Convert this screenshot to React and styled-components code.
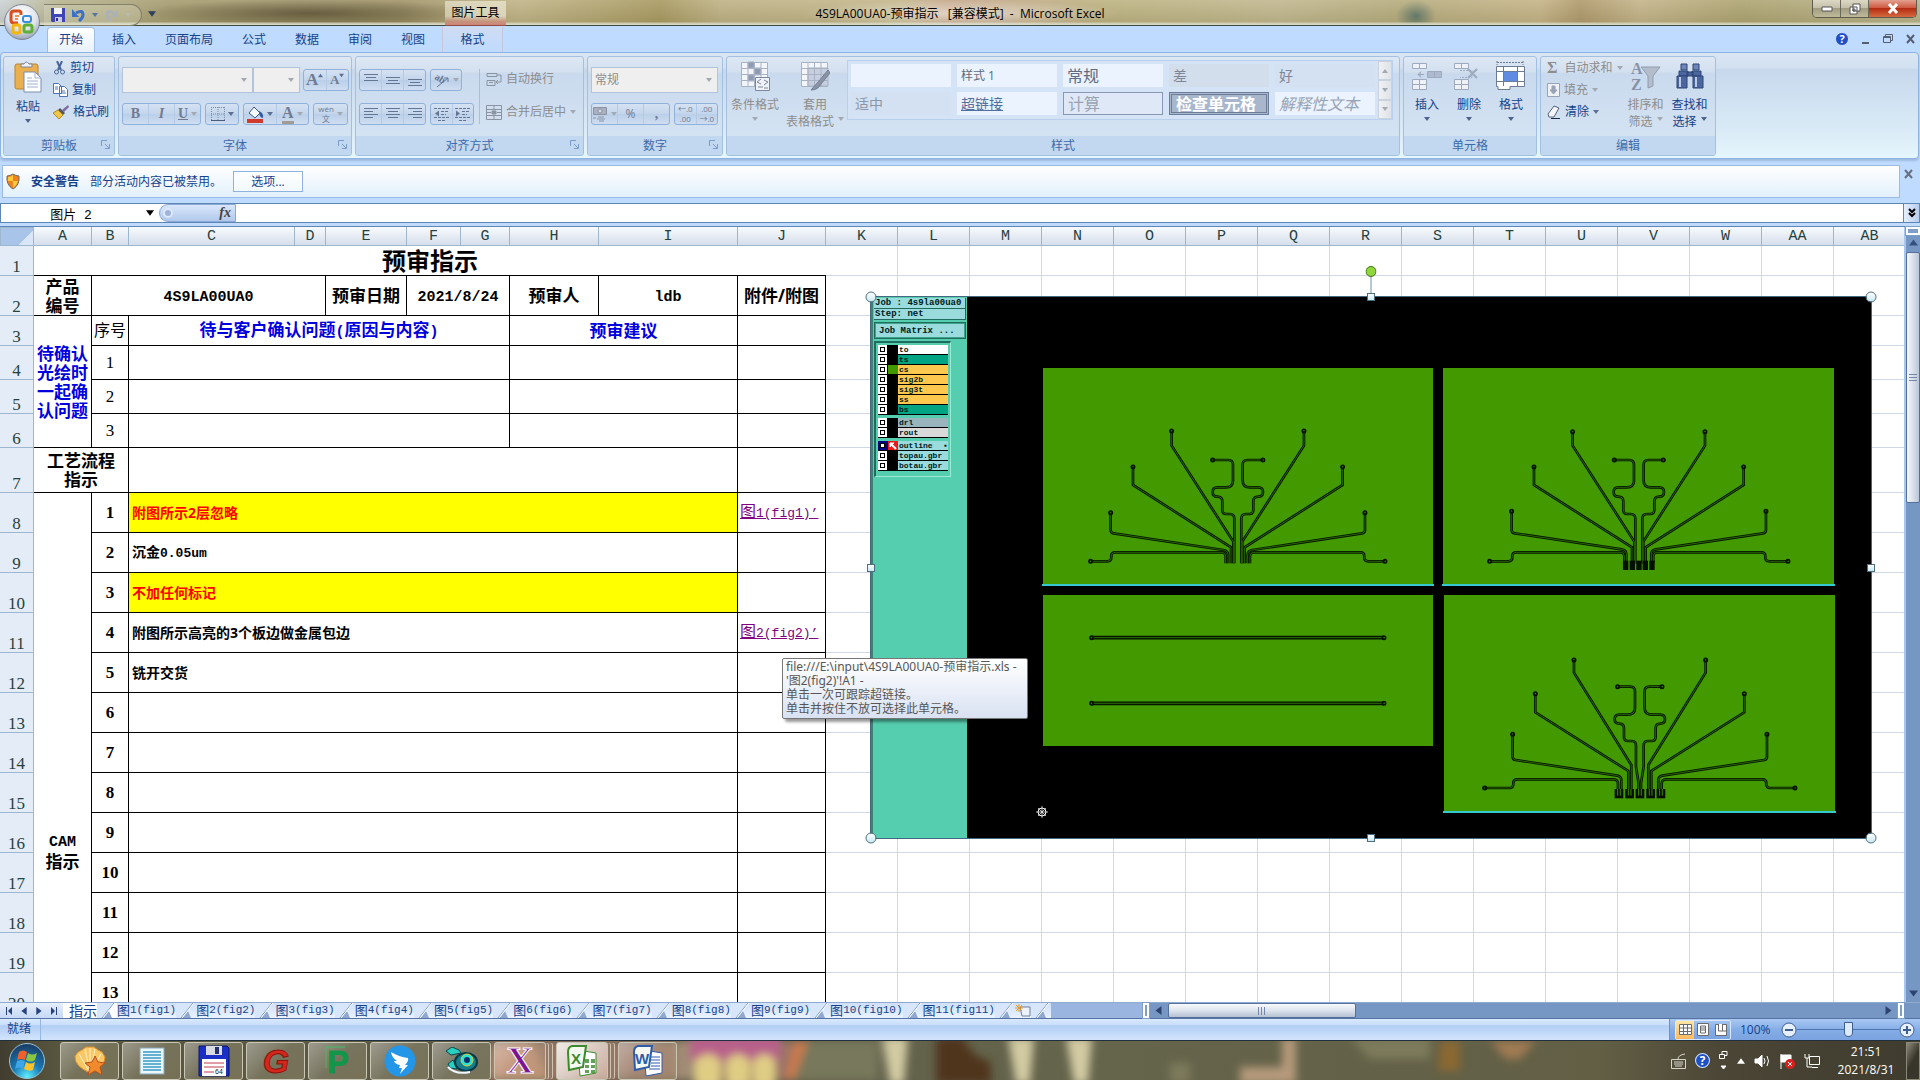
import styled, { createGlobalStyle, css } from "styled-components";

const GlobalStyle = createGlobalStyle`
  * { box-sizing: border-box; }
  body {
    margin: 0;
    overflow: hidden;
    font-family: "Open Sans", "Noto Sans CJK SC", sans-serif;
    font-size: 12px;
    line-height: 16px;
    color: #15428b;
  }
  button, input, select {
    font: inherit;
    color: inherit;
    margin: 0;
    padding: 0;
    border: 0;
    background: none;
    border-radius: 0;
  }
  svg { display: block; flex: none; }
`;

const Window = styled.div`
  display: flex;
  flex-direction: column;
  height: 100vh;
  background: #bfdbff;
`;

/* ---------- title bar ---------- */
const TitleBar = styled.header`
  display: grid;
  grid-template-columns: 1fr auto 1fr;
  height: 26px;
  position: relative;
  color: #000;
  border-bottom: 1px solid #3d4a44;
  background:
    linear-gradient(rgba(255, 255, 255, 0.1), rgba(90, 85, 50, 0.12) 86%, #d8d8c4 96%),
    radial-gradient(ellipse 170px 14px at 310px 13px, rgba(70, 60, 36, 0.7), transparent),
    radial-gradient(ellipse 20px 16px at 1416px 16px, #5f7768, transparent),
    linear-gradient(90deg, #cdd3d6 0, #b7b48f 60px, #a69c70 170px, #a09468 400px, #c0b487 520px, #a99a62 660px, #beb285 720px, #c4b78b 900px, #c4a487 950px, #bdb382 1110px, #c2b78f 1280px, #b6ac7e 1400px, #c6b488 1540px, #b09a6c 1580px, #c4b48a 1640px, #aea472 1740px, #b9b48c 1920px);
`;
const QuickAccess = styled.div`
  display: flex;
  align-items: center;
  gap: 7px;
  margin: 2px 0 0 44px;
  height: 22px;
  width: 98px;
  padding-left: 7px;
  border: 1px solid #85826b;
  border-left: 0;
  border-radius: 0 11px 11px 0;
  background: rgba(235, 235, 215, 0.25);
`;
const BarLeft = styled.div`
  display: flex;
  align-items: center;
  gap: 6px;
`;
const ContextTitle = styled.div`
  margin-left: 283px;
  width: 61px;
  height: 25px;
  line-height: 24px;
  text-align: center;
  background: linear-gradient(rgba(255, 255, 240, 0.5) 60%, rgba(190, 70, 60, 0.7));
`;
const DocTitle = styled.h1`
  margin: 0;
  padding: 0 14px;
  font-size: 12px;
  font-weight: 400;
  line-height: 27px;
  background: radial-gradient(ellipse, rgba(255, 255, 255, 0.55), transparent 72%);
`;
const WindowButtons = styled.div`
  display: flex;
  justify-self: end;
  height: 18px;
  margin-right: 3px;
  border: 1px solid #5b5a4c;
  border-top: 0;
  border-radius: 0 0 5px 5px;
  overflow: hidden;
`;
const WindowButton = styled.button`
  display: grid;
  place-items: center;
  width: ${(p) => (p.$close ? 47 : 28)}px;
  border-right: ${(p) => (p.$close ? 0 : 1)}px solid #6a6856;
  background: ${(p) =>
    p.$close
      ? "linear-gradient(#e3a08f, #cf5a42 45%, #b52c12 50%, #d56a40)"
      : "linear-gradient(#dcd8c6, #c5c0a8 45%, #a29c80 50%, #c0ba9c)"};
`;

/* The orb hangs over both the title bar and the tab strip */
const OfficeOrb = styled.button`
  position: absolute;
  left: 3px;
  top: 4px;
  z-index: 3;
`;

/* ---------- ribbon ---------- */
const TabStrip = styled.nav`
  display: flex;
  align-items: flex-end;
  height: 26px;
  padding-left: 47px;
  gap: 5px;
`;
const Tab = styled.button`
  height: 24px;
  padding: 0 12px;
  line-height: 22px;
  ${(p) =>
    p.$active &&
    css`
      height: 25px;
      border: 1px solid #9bbfea;
      border-bottom: 0;
      padding: 0 11px;
      border-radius: 4px 4px 0 0;
      background: linear-gradient(#fff, #e8f1fb);
    `}
`;
const ContextTab = styled(Tab)`
  height: 25px;
  width: 61px;
  background: linear-gradient(#cfdcf2, #bfdbff);
  border-left: 1px solid #c5c6da;
  border-right: 1px solid #c5c6da;
`;
const TabTools = styled.div`
  display: flex;
  align-items: center;
  gap: 13px;
  height: 26px;
  margin-left: auto;
  padding-right: 5px;
`;
const Ribbon = styled.section`
  display: flex;
  gap: 3px;
  height: 107px;
  margin-right: 1px;
  padding: 3px 3px 0 2px;
  border: 1px solid #8db2e3;
  border-radius: 4px;
  background: linear-gradient(#dbe6f4, #d2e0f0 14%, #c7d8ed 16%, #dcedf8 80%, #e5f6fd);
  box-shadow: 0 2px 2px #9fbbdf;
`;
const GroupBox = styled.div`
  display: flex;
  flex-direction: column;
  width: ${(p) => p.$w}px;
  height: 100px;
  border: 1px solid #a3c0e0;
  border-radius: 3px;
  overflow: hidden;
  background: linear-gradient(#dde8f4, #d3e0ef 15%, #c9daee 17%, #d8e6f4);
`;
const GroupBody = styled.div`
  display: flex;
  flex: 1;
  gap: ${(p) => p.$gap || 0}px;
  padding: ${(p) => p.$pad || "0 3px"};
`;
const GroupCaption = styled.div`
  position: relative;
  height: 19px;
  line-height: 19px;
  text-align: center;
  color: #3e6aaa;
  background: #c1d8f0;
`;
const Launcher = styled.button`
  position: absolute;
  right: 4px;
  top: 4px;
`;
const Stack = styled.div`
  display: flex;
  flex-direction: column;
  gap: ${(p) => p.$gap || 0}px;
`;
const Line = styled.div`
  display: flex;
  align-items: center;
  gap: ${(p) => p.$gap || 0}px;
`;
const BigButton = styled.button`
  display: flex;
  flex-direction: column;
  align-items: center;
  justify-content: flex-start;
  width: ${(p) => p.$w}px;
  padding-top: 4px;
  line-height: 17px;
  color: ${(p) => (p.$off ? "#8d8d8d" : "#15428b")};
  svg:first-child { margin-bottom: 5px; }
  span { display: flex; align-items: center; gap: 4px; min-height: 16px; white-space: nowrap; }
`;
const SmallButton = styled.button`
  display: flex;
  align-items: center;
  gap: 4px;
  height: 22px;
  white-space: nowrap;
  color: ${(p) => (p.$off ? "#8d8d8d" : "#15428b")};
`;
const Combo = styled.select`
  appearance: none;
  width: ${(p) => p.$w}px;
  height: 26px;
  padding-left: 3px;
  border: 1px solid #b1c4dc;
  background: #efefef;
  color: #8d8d8d;
  opacity: 1;
`;
const ComboWrap = styled.label`
  display: flex;
  align-items: center;
  svg { margin-left: -12px; margin-right: 6px; }
`;
const Cluster = styled.div`
  display: flex;
  width: ${(p) => p.$w}px;
  height: 22px;
  border: 1px solid #8fb1dc;
  border-radius: 3px;
  background: linear-gradient(#d5e2f2, #c4d6ec 48%, #bacfe9 52%, #cfdef1);
`;
const Tool = styled.button`
  display: flex;
  flex: 1;
  align-items: center;
  justify-content: center;
  gap: 3px;
  color: #707a92;
  border-right: 1px solid #b4cae6;
  &:last-child { border-right: 0; }
  b, i, u { font: bold 14px "Liberation Serif", serif; }
  i { font-style: italic; }
`;
const SizeTool = styled(Tool)`
  gap: 0;
  svg { align-self: flex-start; margin-top: 3px; }
`;
const Letter = styled.span`
  font: bold ${(p) => p.$size}px/16px "Liberation Serif", serif;
  border-bottom: ${(p) => (p.$bar ? "3px solid #a39c94" : "0")};
`;
const Pinyin = styled.span`
  display: flex;
  flex-direction: column;
  font-size: 8px;
  line-height: 10px;
  text-align: center;
`;
const Divider = styled.div`
  width: 1px;
  height: 55px;
  margin: 12px 6px 0 5px;
  background: #a8c0de;
`;

const Gallery = styled.div`
  display: flex;
  height: 60px;
  margin-top: 3px;
  border: 1px solid #b9d0ed;
  background: #d4e3f6;
`;
const GalleryGrid = styled.div`
  display: grid;
  grid-template-columns: repeat(5, 100px);
  grid-auto-rows: 23px;
  gap: 5px 6px;
  padding: 3px 3px;
`;
const StyleCell = styled.button`
  padding-left: 4px;
  text-align: left;
  line-height: 16px;
  white-space: nowrap;
  font-size: ${(p) => p.$size || 16}px;
  color: ${(p) => p.$color || "#7d8798"};
  background: ${(p) => p.$bg || "#eaf3ff"};
  border: ${(p) => p.$border || "0"};
  font-weight: ${(p) => (p.$bold ? 700 : 400)};
  font-style: ${(p) => (p.$italic ? "italic" : "normal")};
  text-decoration: ${(p) => (p.$under ? "underline" : "none")};
`;
const GalleryScroll = styled.div`
  display: grid;
  width: 14px;
  button {
    display: grid;
    place-items: center;
    border: 1px solid #c9d2dd;
    background: linear-gradient(90deg, #f0f1f3, #dfe2e7);
  }
`;

/* ---------- message bar and formula bar ---------- */
const MessageRow = styled.div`
  display: flex;
  gap: 4px;
  margin: 6px 2px 5px 2px;
`;
const MessageBar = styled.div`
  display: flex;
  flex: 1;
  align-items: center;
  gap: 11px;
  height: 33px;
  padding-left: 3px;
  border: 1px solid #9cbbe2;
  background: linear-gradient(#fff, #e2f0fb);
`;
const OptionsButton = styled.button`
  width: 70px;
  height: 21px;
  border: 1px solid #8fb3e0;
  background: linear-gradient(#fff, #f2f9ff);
`;
const Close = styled.button`
  align-self: flex-start;
  width: 14px;
  height: 18px;
`;
const FormulaBar = styled.div`
  display: flex;
  height: 20px;
  margin-bottom: 3px;
  border: 1px solid #5f86b5;
  background: #fff;
`;
const NameBox = styled.input`
  width: 145px;
  padding-right: 5px;
  text-align: center;
  color: #000;
  font: 13px "Liberation Mono", "Noto Sans CJK SC", monospace;
`;
const FxZone = styled.div`
  display: flex;
  align-items: center;
  justify-content: space-between;
  width: 77px;
  margin-left: 5px;
  padding: 0 4px 0 3px;
  border: 1px solid #8aa9d6;
  border-radius: 10px 0 0 10px;
  background: linear-gradient(#d9e7fa, #b1c9ec);
  font: italic bold 14px "Liberation Serif", serif;
  color: #444;
`;
const Knob = styled.span`
  width: 10px;
  height: 10px;
  border-radius: 50%;
  background: #9fb4d6;
  border: 2px solid #dde8f8;
`;
const FormulaInput = styled.input`
  flex: 1;
  min-width: 0;
`;
const Expand = styled.button`
  display: grid;
  place-items: center;
  width: 16px;
  border-left: 1px solid #5f86b5;
  background: linear-gradient(90deg, #e6effb, #b6cdef);
`;

/* ---------- sheet ---------- */
const Workspace = styled.main`
  display: flex;
  flex: 1;
  min-height: 0;
  border-top: 1px solid #5f86b5;
`;
const Sheet = styled.div`
  position: relative;
  flex: 1;
  min-width: 0;
  overflow: hidden;
  background: #fff;
`;
const Grid = styled.table`
  table-layout: fixed;
  width: 1906px;
  border-spacing: 0;
  color: #000;
  tr { height: 40px; }
`;
const ColHead = styled.th`
  height: 19px;
  padding: 1px 0 0;
  font: 15px/17px "Liberation Mono", monospace;
  color: #27413e;
  border-right: 1px solid #9eb6ce;
  border-bottom: 1px solid #9eb6ce;
  background: linear-gradient(#f8fbfd, #d5deeb);
`;
const Corner = styled.th`
  padding: 0;
  border: 1px solid #9eb6ce;
  background: linear-gradient(135deg, #a9c4e9 70%, #d9e6f8 70%);
`;
const RowHead = styled.th`
  padding: 0;
  vertical-align: bottom;
  font: 17px/17px "Liberation Serif", serif;
  color: #27413e;
  border-right: 1px solid #9eb6ce;
  border-bottom: 1px solid #9eb6ce;
  background: #e4ecf7;
`;
const Blank = styled.td`
  padding: 0;
  border-right: 1px solid #d0d7e5;
  border-bottom: 1px solid #d0d7e5;
`;
const Cell = styled.td`
  padding: 0;
  text-align: center;
  white-space: nowrap;
  font-size: 17px;
  font-weight: 700;
  line-height: 19px;
  border-bottom: 1px solid #000;
  border-right: 1px solid #000;
  color: ${(p) => (p.$blue ? "#0000dd" : "#000")};
`;
const SheetTitle = styled(Cell)`
  font-size: 24px;
  line-height: 26px;
  border-right: 0;
`;
const PlainCell = styled(Cell)`
  font-size: 16px;
  font-weight: 400;
`;
const NumberCell = styled(Cell)`
  font: ${(p) => (p.$plain ? 400 : 700)} 17px/19px "Liberation Serif", serif;
`;
const NoteCell = styled(Cell)`
  text-align: left;
  padding: 0 0 1px 3px;
  font-size: 14px;
  color: ${(p) => (p.$hot ? "#ff0000" : "#000")};
  background: ${(p) => (p.$hot ? "#ffff00" : "#fff")};
`;
const LinkCell = styled(Cell)`
  text-align: left;
  padding-left: 2px;
  font-size: 16px;
  font-weight: 400;
  a { color: #800080; }
`;
const Half = styled.span`
  font-family: "Liberation Mono", monospace;
  font-size: ${(p) => p.$size || 13}px;
`;

/* ---------- placed picture and hyperlink tip ---------- */
const Picture = styled.figure`
  position: absolute;
  left: 870px;
  top: 69px;
  display: flex;
  width: 1002px;
  height: 543px;
  margin: 0;
  background: #000;
  border: 1px solid #44687f;
`;
const Handle = styled.span`
  position: absolute;
  left: ${(p) => p.$x};
  top: ${(p) => p.$y};
  width: ${(p) => (p.$round ? 11 : 8)}px;
  height: ${(p) => (p.$round ? 11 : 8)}px;
  transform: translate(-50%, -50%);
  border: 1px solid #4c6f80;
  border-radius: ${(p) => (p.$round ? "50%" : "0")};
  background: linear-gradient(#fff, #c9e9f3);
`;
const RotateHandle = styled.span`
  position: absolute;
  left: 50%;
  top: -31px;
  height: 30px;
  transform: translateX(-50%);
`;
const LayerPanel = styled.div`
  width: 96px;
  padding: 1px;
  border-left: 2px solid #3d8373;
  background: #55ceb0;
  font: bold 9px/10px "Liberation Mono", monospace;
  color: #001a1a;
`;
const JobLine = styled.div`
  height: 11px;
  padding-left: 1px;
  white-space: nowrap;
  background: #9adbdd;
  border: 1px solid #1f6b5c;
  border-width: 0 1px 1px 0;
`;
const MatrixButton = styled.button`
  width: 100%;
  height: 17px;
  margin: 2px 0;
  padding-left: 3px;
  text-align: left;
  background: #9adbdd;
  border: 2px solid #3da38b;
  outline: 1px solid #1f6b5c;
  outline-offset: -1px;
`;
const LayerList = styled.div`
  display: flex;
  flex-direction: column;
  gap: 3px;
  width: 77px;
  height: 136px;
  padding: 2px 2px;
  border: 2px solid #1f6b5c;
  border-right: 1px solid #9fe8d6;
  border-bottom: 1px solid #9fe8d6;
`;
const LayerRow = styled.label`
  display: grid;
  grid-template-columns: 10px 10px 1fr;
  height: 10px;
  background: #000;
  border-bottom: 1px solid #000;
  font-size: 8px;
  line-height: 9px;
  input {
    appearance: none;
    width: 9px;
    height: 9px;
    border: 2px solid ${(p) => (p.$on ? "#000080" : "#fff")};
    outline: 1px solid #000;
    outline-offset: -3px;
    background: #fff;
  }
`;
const Swatch = styled.i`
  background: ${(p) => p.$color};
`;
const LayerName = styled.span`
  display: flex;
  justify-content: space-between;
  padding-left: 1px;
  background: ${(p) => p.$color};
`;
const Board = styled.svg`
  flex: 1;
`;
const LinkTip = styled.div`
  position: absolute;
  left: 782px;
  top: 431px;
  padding: 1px 3px 2px;
  width: 246px;
  border: 1px solid #767676;
  border-radius: 2px;
  font-family: "Noto Sans", "Noto Sans CJK SC", sans-serif;
  line-height: 14px;
  white-space: nowrap;
  color: #575757;
  background: linear-gradient(#fff, #d9e2f2);
  box-shadow: 3px 3px 3px rgba(0, 0, 0, 0.4);
`;

/* ---------- scroll bars ---------- */
const VScroll = styled.div`
  display: flex;
  flex-direction: column;
  align-items: center;
  width: 16px;
  padding-bottom: 4px;
  border-left: 2px solid #a9c6ec;
  background: #7696c4;
`;
const SplitBox = styled.span`
  width: ${(p) => (p.$tall ? 6 : 14)}px;
  height: ${(p) => (p.$tall ? 15 : 8)}px;
  border: 2px solid #fff;
  outline: 1px solid #7f9fc8;
  background: #7f9fc8;
`;
const ArrowSlot = styled.div`
  display: grid;
  place-items: center;
  height: 14px;
`;
const VThumb = styled.div`
  display: grid;
  place-items: center;
  width: 14px;
  height: 251px;
  margin: 3px 0 auto;
  border: 1px solid #56709c;
  border-radius: 2px;
  background: linear-gradient(90deg, #f4f7fb, #dfe5ee 40%, #b9c5d8);
`;
const SheetBar = styled.div`
  display: flex;
  height: 17px;
  border-top: 1px solid #8fa9d0;
  border-bottom: 1px solid #5673a3;
  background: #9ab5e0;
`;
const NavButtons = styled.div`
  display: flex;
  align-items: center;
  justify-content: space-around;
  width: 63px;
  padding: 0 3px;
  background: linear-gradient(#e6effb, #c5d8f5);
`;
const SheetTab = styled.button`
  display: flex;
  align-items: center;
  height: 15px;
  line-height: 15px;
  white-space: nowrap;
  font-size: ${(p) => (p.$active ? 14 : 13)}px;
  padding-left: ${(p) => (p.$active ? 6 : 0)}px;
  background: ${(p) => (p.$active ? "#fff" : "linear-gradient(#cfe0fa, #e9f2ff)")};
`;
const HScroll = styled.div`
  display: flex;
  flex: 1;
  align-items: center;
  gap: 5px;
  max-width: 761px;
  margin-left: auto;
  background: #7696c4;
`;
const HThumb = styled.div`
  display: grid;
  place-items: center;
  width: 188px;
  height: 15px;
  margin-right: auto;
  border: 1px solid #56709c;
  border-radius: 2px;
  background: linear-gradient(#f8fafc, #dde4ee 50%, #b4c0d2);
`;
const ScrollEnd = styled.div`
  width: 16px;
  background: #7696c4;
`;

/* ---------- status bar ---------- */
const StatusBar = styled.footer`
  display: flex;
  justify-content: space-between;
  height: 22px;
  line-height: 20px;
  border-bottom: 1px solid #20303f;
  background: linear-gradient(#d9e9fd, #c9defa 28%, #b1cef5 32%, #d0e3fb 95%);
`;
const Ready = styled.div`
  width: 41px;
  padding-left: 7px;
  border-right: 1px solid #98b8e4;
`;
const ZoomZone = styled.div`
  display: flex;
  align-items: center;
  width: 251px;
  padding: 0 5px 0 5px;
  border-left: 1px solid #6c91c4;
  background: linear-gradient(#a9c8f3, #85aee8 50%, #7aa3df);
`;
const ViewButtons = styled.div`
  display: flex;
  border: 1px solid #dbe8fa;
  border-radius: 2px;
  margin-right: 9px;
  button { display: grid; place-items: center; width: 18px; height: 18px; }
  button:first-child { background: linear-gradient(#ffe6a8, #ffb95a); }
`;
const ZoomText = styled.span`
  width: 41px;
`;
const Zoom = styled.input`
  appearance: none;
  flex: 1;
  min-width: 0;
  height: 16px;
  background: linear-gradient(#4f74aa, #4f74aa) center / 100% 1px no-repeat;
  &::-webkit-slider-thumb {
    appearance: none;
    width: 9px;
    height: 15px;
    border: 1px solid #3e5f92;
    border-radius: 1px 1px 5px 5px;
    background: #dfe9f7;
  }
`;

/* ---------- taskbar ---------- */
const Taskbar = styled.footer`
  display: flex;
  align-items: center;
  gap: 3px;
  height: 39px;
  position: relative;
  overflow: hidden;
  background: linear-gradient(90deg, #403d30, #59563f 60px, #5e5b49 600px, #65654c 1100px, #625f45 1600px, #4b4636 1720px, #3f3b2e);
`;
const Wallpaper = styled.svg`
  position: absolute;
  left: 490px;
  top: 0;
`;
const StartButton = styled.button`
  position: relative;
  width: 54px;
  margin-right: 3px;
  svg { margin-left: 8px; }
`;
const TaskButton = styled.button`
  position: relative;
  display: grid;
  place-items: center;
  width: ${(p) => (p.$stack ? 52 : 59)}px;
  height: 38px;
  margin-right: ${(p) => (p.$stack ? 7 : 0)}px;
  border: 1px solid #c9c7b4;
  border-radius: 3px;
  background: ${(p) =>
    p.$active
      ? "linear-gradient(135deg, rgba(255,255,255,.85), rgba(240,215,200,.55))"
      : "linear-gradient(135deg, rgba(255,255,255,.4), rgba(200,195,165,.25) 50%, rgba(180,170,130,.3))"};
  ${(p) =>
    p.$stack &&
    css`box-shadow: 3px 0 0 -1px #8d7a68, 4px 0 0 -1px #d6c0b0, 7px 0 0 -1px #8d7a68, 8px 0 0 -1px #d6c0b0;`}
`;
const Tray = styled.div`
  position: relative;
  display: flex;
  align-items: center;
  gap: 9px;
  margin-left: auto;
  color: #fff;
`;
const Clock = styled.time`
  margin-left: 6px;
  width: 62px;
  text-align: center;
  line-height: 18px;
  white-space: nowrap;
`;
const ShowDesktop = styled.button`
  width: 14px;
  height: 38px;
  border: 1px solid #8a8876;
  background: linear-gradient(120deg, #8c8a7a, #38352a 50%);
`;

/* ---------- small drawings ---------- */
const Arrow = ({ dir = "down", color = "#5c6f94", size = 6 }) => {
  const d = {
    down: "M0 1h6L3 5z",
    up: "M0 5h6L3 1z",
    left: "M5 0v6L1 3z",
    right: "M1 0v6l4-3z",
  }[dir];
  return (
    <svg width={size} height={size} viewBox="0 0 6 6">
      <path d={d} fill={color} />
    </svg>
  );
};

const LaunchIcon = () => (
  <svg width="9" height="9" viewBox="0 0 9 9" fill="none" stroke="#7b9dcb">
    <path d="M.5 6V.5H6M4 4l4 4M8.500 4v4.500H4" />
  </svg>
);

const Bars = ({ rows, w = 14 }) => (
  <svg width={w} height="14" viewBox="0 0 14 14" stroke="#657594">
    {rows.map(([x, y, len]) => (
      <path key={y} d={`M${x} ${y + 0.5}h${len}`} />
    ))}
  </svg>
);

const OrbIcon = () => (
  <svg width="38" height="38" viewBox="0 0 38 38">
    <defs>
      <radialGradient id="orb" cx="50%" cy="30%" r="70%">
        <stop offset="0" stopColor="#fff" />
        <stop offset=".6" stopColor="#dfe3ea" />
        <stop offset="1" stopColor="#98a4b8" />
      </radialGradient>
    </defs>
    <circle cx="19" cy="18" r="17.500" fill="url(#orb)" stroke="#7d8490" />
    <g fill="none" strokeWidth="3">
      <path d="M18 11V9q0-2-2-2h-5q-3 0-3 3v6q0 3 3 3h4" stroke="#d8501e" />
      <path d="M12 12h4M12 15h3" stroke="#f0904e" strokeWidth="2" />
      <rect x="20" y="12" width="8" height="6" rx="2" stroke="#3b8ede" strokeWidth="2" />
      <rect x="10" y="21" width="7" height="8" rx="2" stroke="#f6b511" />
      <rect x="21" y="21" width="8" height="7" rx="2" stroke="#5fae36" />
    </g>
  </svg>
);

const SaveIcon = () => (
  <svg width="14" height="14" viewBox="0 0 14 14">
    <path d="M0 0h14v14H1l-1-1z" fill="#3f45b5" />
    <path d="M3 0h8v6H3z" fill="#f2f3fb" />
    <path d="M4 9h7v5H4z" fill="#c9cbe8" />
    <path d="M5 10h2v3H5z" fill="#2b2f8d" />
  </svg>
);
const CurveArrow = ({ color, flip }) => (
  <svg width="13" height="14" viewBox="0 0 13 14" fill="none" stroke={color} strokeWidth="3">
    <g transform={flip ? "matrix(-1 0 0 1 13 0)" : undefined}>
      <path d="M4 5q7-4 7 2 0 3-4 6" />
      <path d="M0 1v8h7z" fill={color} stroke="none" />
    </g>
  </svg>
);
const PasteIcon = () => (
  <svg width="28" height="32" viewBox="0 0 28 32">
    <rect x="1" y="3" width="23" height="25" rx="2" fill="#eab04f" stroke="#b98430" />
    <path d="M7 6V3h3q2-4 5 0h3v3z" fill="#eef1f5" stroke="#7b8799" />
    <path d="M10 11h11l6 6v14H10z" fill="#fff" stroke="#7b8db0" />
    <path d="M21 11v6h6M13 17h5M13 20h11M13 23h11M13 26h11" fill="none" stroke="#9db0cf" />
  </svg>
);
const CutIcon = () => (
  <svg width="13" height="14" viewBox="0 0 13 14" fill="none" stroke="#4a659b">
    <path d="M4 0l4 9M9 0L5 9" strokeWidth="2" />
    <circle cx="3.500" cy="11" r="2" />
    <circle cx="9.500" cy="11" r="2" />
  </svg>
);
const CopyIcon = () => (
  <svg width="15" height="14" viewBox="0 0 15 14" fill="#fff" stroke="#4c74b5">
    <path d="M.5 .5h5l3 3v7h-8zM6.500 3.500h5l3 3v7h-8z" />
    <path d="M2 4h3M2 6h3M8 8h4M8 10h5" />
  </svg>
);
const BrushIcon = () => (
  <svg width="16" height="14" viewBox="0 0 16 14">
    <path d="M15 0l1 2-5 5-2-2z" fill="#7e6aa0" />
    <path d="M7 3l5 5-2 2-5-5z" fill="#53565e" />
    <path d="M5 5l5 5-4 4-6-6z" fill="#f0c64a" stroke="#b18a22" />
  </svg>
);
const BorderIcon = () => (
  <svg width="14" height="14" viewBox="0 0 14 14" fill="none" stroke="#7d8aa6">
    <path d="M.5 0v13M13.500 0v13M7 0v13M0 .5h14M0 7h14" strokeDasharray="1 1" />
    <path d="M0 13.500h14" stroke="#4d5b7c" />
  </svg>
);
const FillIcon = () => (
  <svg width="17" height="17" viewBox="0 0 17 17">
    <path d="M7 1l6 6-5 5-6-5z" fill="#f5f8fd" stroke="#3d5585" />
    <path d="M12 5q5 2 4 7-4 0-4-7z" fill="#335da5" />
    <path d="M0 13h16v4H0z" fill="#d0392b" />
  </svg>
);
const OrientIcon = () => (
  <svg width="16" height="16" viewBox="0 0 16 16" fill="none" stroke="#657594">
    <text x="0" y="9" fontSize="10" fontWeight="700" fill="#657594" stroke="none" transform="rotate(30 4 8)" fontFamily="Liberation Serif">ab</text>
    <path d="M3 15L14 6M14 10V6h-4" />
  </svg>
);
const IndentIcon = ({ flip }) => (
  <svg width="15" height="14" viewBox="0 0 15 14" stroke="#657594">
    <path d="M0 1.500h15M7 4.500h8M7 7.500h5M0 10.500h15M4 13.500h7" strokeDasharray="3 1" />
    <path d={flip ? "M1 3.500l4 3-4 3z" : "M5 3.500l-4 3 4 3z"} fill="#657594" stroke="none" />
  </svg>
);
const WrapIcon = () => (
  <svg width="16" height="15" viewBox="0 0 16 15" fill="none" stroke="#8b93a0">
    <path d="M1 1.500h10v3H1zM1 8.500h8v5H1zM3 10.500h4M11 3h4v7h-5M12 8l-2 2 2 2" />
  </svg>
);
const MergeIcon = () => (
  <svg width="16" height="15" viewBox="0 0 16 15" fill="none" stroke="#8b93a0">
    <path d="M.5 .5h15v14H.5zM8 0v4M8 11v4M0 4.500h16M0 10.500h16M1 7.500h4M11 7.500h4" />
    <path d="M6 6h4v3H6z" fill="#8b93a0" />
  </svg>
);
const MoneyIcon = () => (
  <svg width="16" height="16" viewBox="0 0 16 16" fill="none" stroke="#8b93a3">
    <path d="M1.500 1.500h13v7h-13z" fill="#a9b1c0" />
    <circle cx="8" cy="5" r="2" fill="#d6dce6" />
    <path d="M6 11h6M5 13h8M7 15h5M1 12h3" />
  </svg>
);
const TableIcon = ({ brush }) => (
  <svg width="30" height="30" viewBox="0 0 30 30" fill="none" stroke="#a9b2c3">
    <path d="M1.500 1.500h26v24h-26z" fill="#f2f5fa" />
    <path d={brush ? "M8 7h20v18H8z" : "M8 1h6v6H8zM14 7h7v7h-7zM8 14h6v6H8z"} fill={brush ? "#c6cfdf" : "#8f9bb2"} />
    <path d="M8 1v25M14.500 1v25M21 1v25M1 7.500h27M1 13.500h27M1 19.500h27" />
    {brush ? (
      <path d="M28 9l-9 11-8 9q7 0 10-6l9-11z" fill="#8b94a6" stroke="#737c90" />
    ) : (
      <g stroke="#7c879d">
        <path d="M15.500 16.500h14v13h-14z" fill="#eef2f8" />
        <path d="M21 18l-4 3 4 2M24 19l4 2-4 3M18 26h5M24 27h4" />
      </g>
    )}
  </svg>
);
const InsertCells = ({ remove }) => (
  <svg width="30" height="30" viewBox="0 0 30 30" fill="#eef2f8" stroke="#9daabf">
    <path d="M.5 2.500h14v5H.5zM7.500 2.500v5M.5 18.500h14v10H.5zM7.500 18v10M.5 23.500h14" />
    {remove ? (
      <g fill="none">
        <path d="M6 9.500h12v7H6" strokeDasharray="2 1" />
        <path d="M14 8l9 9M23 8l-9 9" strokeWidth="2" />
      </g>
    ) : (
      <path d="M15.500 10.500h14v6h-14zM22.500 10v6M12 13.500H6M9 10.500l-3 3 3 3" fill="#aebacf" />
    )}
  </svg>
);
const FormatCells = () => (
  <svg width="30" height="30" viewBox="0 0 30 30" fill="#fff" stroke="#6c7b95">
    <path d="M1 1.500h26M1 0v4M27 0v4" strokeDasharray="2 1" />
    <path d="M.5 5.500h28v20H14v3H2v-3H.5z" />
    <path d="M7.500 5v20M21.500 5v20M0 10.500h29M0 20.500h29" />
    <path d="M8 11h13v9H8z" fill="#5f8be0" stroke="none" />
  </svg>
);
const FillDown = () => (
  <svg width="13" height="14" viewBox="0 0 13 14" fill="#eef1f6" stroke="#9aa3b4">
    <path d="M.5 .5h12v13H.5z" />
    <path d="M5 3h3v4h2l-3.500 4L3 7h2z" fill="#9aa3b4" />
  </svg>
);
const Eraser = () => (
  <svg width="14" height="14" viewBox="0 0 14 14" fill="#f3f5fb" stroke="#56607c">
    <path d="M7 1l5 2-5 9H2L1 9z" />
    <path d="M4 13.500h9" stroke="#1e2740" />
  </svg>
);
const SortIcon = () => (
  <svg width="30" height="30" viewBox="0 0 30 30" fill="#8793a8">
    <text x="0" y="13" fontSize="16" fontWeight="700" fontFamily="Liberation Serif">A</text>
    <text x="0" y="29" fontSize="16" fontWeight="700" fontFamily="Liberation Serif">Z</text>
    <path d="M10 6h19l-7 9v10l-5 2V15z" fill="#b4bdcc" stroke="#919caf" />
  </svg>
);
const Binoculars = () => (
  <svg width="28" height="30" viewBox="0 0 28 30" fill="#4c66a0" stroke="#2c4475">
    <path d="M5 3h6v6H5zM17 3h6v6h-6z" fill="#6d86bb" />
    <path d="M3 10h9v5H3zM16 10h9v5h-9zM11 11h6v4h-6z" />
    <path d="M1 15h10v12H1zM17 15h10v12H17z" />
    <path d="M4 16v10M20 16v10" stroke="#b8c9ea" strokeWidth="2" />
  </svg>
);
const Shield = () => (
  <svg width="14" height="17" viewBox="0 0 14 17">
    <path d="M7 1q3 2 6 2 1 9-6 13Q0 12 1 3q3 0 6-2z" fill="#f0821e" stroke="#6d6a66" />
    <path d="M7 2v6H2V4q3 0 5-2zM7 8h5q-1 4-5 7z" fill="#ffc93c" />
  </svg>
);
const HelpIcon = ({ size = 14 }) => (
  <svg width={size} height={size} viewBox="0 0 14 14">
    <circle cx="7" cy="7" r="6.500" fill="#1f4fc4" stroke="#cfe0ff" />
    <text x="7" y="11" fontSize="11" fontWeight="700" textAnchor="middle" fill="#fff">?</text>
  </svg>
);

const Slash = () => (
  <svg width="20" height="15" viewBox="0 0 20 15">
    <path d="M0 0h18L6 15H0z" fill="#d8e6fb" />
    <path d="M6 15l6-7 3 7z" fill="#8fa8d2" />
    <path d="M17 0L5 15" stroke="#7c9acb" />
    <path d="M18 0L6 15" stroke="#fff" />
  </svg>
);

/* ---------- board traces ---------- */
const TRACES = {
  narrow: [
    "M425 243V287L610 575V640",
    "M309 351V405L603 592V640",
    "M242 488V540q0 9 9 10L580 600q14 2 14 14V640",
    "M182 634H232q12 0 12-12v-4q0-11 12-11H575q12 0 12 12V640",
    "M548 330H595q14 0 14 14V392q0 20-22 20H562q-14 0-14 14 0 14 14 14 15 0 15 14V480q0 12 12 12h10q14 0 14 14V640",
  ],
  pads: [
    "M425 245V287L610 575V640",
    "M309 351V405L603 592V640",
    "M242 484V540q0 9 9 10L572 598q14 2 14 14V640",
    "M176 634H232q12 0 12-12v-4q0-11 12-11H568q12 0 12 12V640",
    "M550 330H595q14 0 14 14V392q0 20-22 20H562q-14 0-14 14 0 14 14 14 15 0 15 14V480q0 12 12 12h10q14 0 14 14V640",
  ],
  wide: [
    "M426 249V287L598 564V655",
    "M310 350V406L589 582V655",
    "M242 472V539q0 9 9 10L556 596q12 2 12 14V655",
    "M158 633H232q12 0 12-12v-4q0-10 12-10H545q13 0 13 14V655",
    "M557 329H595q14 0 14 14V393q0 20-22 20H562q-14 0-14 14 0 13 14 13 14 0 14 14V479q0 13 12 13h12q12 0 12 14V569l8 50V655",
  ],
};

const Fan = ({ kind, pads = [] }) => {
  const half = (
    <g fill="none">
      {TRACES[kind].map((d) => (
        <path key={d} d={d} stroke="#041600" strokeWidth="8" />
      ))}
      {TRACES[kind].map((d) => (
        <path key={d} d={d} stroke="#3d8a02" strokeWidth="2" />
      ))}
      {TRACES[kind].map((d) => {
        const [x, y] = d.slice(1).split(/[VH]/)[0].split(" ");
        return <circle key={d} cx={x} cy={y} r="5" stroke="#041200" strokeWidth="5" />;
      })}
    </g>
  );
  return (
    <>
      {half}
      <g transform="matrix(-1 0 0 1 1247 0)">{half}</g>
      {pads.map((x) => (
        <g key={x}>
          <rect x={x} y={kind === "wide" ? 636 : 632} width={kind === "wide" ? 26 : 16} height="28" fill="#031000" />
          {kind === "wide" && <path d={`M${x + 9} 636v20M${x + 17} 636v20`} stroke="#3d8a02" strokeWidth="3" />}
        </g>
      ))}
    </>
  );
};

const BoardDrawing = () => (
  <Board viewBox="0 0 904 541" preserveAspectRatio="xMinYMin meet" role="img" aria-label="outline">
    <g fill="#439900">
      <path d="M76 71h390v216H76zM476 71h391v216H476zM76 298h390v151H76zM477 298h391v216H477z" />
    </g>
    <path d="M75 288h392M475 288h393M476 515h393" stroke="#35c8cf" strokeWidth="2" />
    <g transform="translate(63 53) scale(.3333)">
      <Fan kind="narrow" />
      {[863, 1060].map((y) => (
        <g key={y} fill="none" stroke="#041600">
          <path d={`M185 ${y}H1062`} strokeWidth="11" />
          <path d={`M185 ${y}H1062`} strokeWidth="3" stroke="#2d6c02" />
          <circle cx="185" cy={y} r="5" strokeWidth="5" />
          <circle cx="1062" cy={y} r="5" strokeWidth="5" />
        </g>
      ))}
    </g>
    <g transform="translate(464 53) scale(.3333)">
      <Fan kind="pads" pads={[576, 596, 616, 635, 655]} />
    </g>
    <g transform="translate(465 280) scale(.3333)">
      <Fan kind="wide" pads={[548, 580, 611, 643, 674]} />
    </g>
    <g stroke="#fff" fill="none">
      <circle cx="75" cy="515" r="4" />
      <path d="M75 509v12M69 515h12M71 511l8 8M79 511l-8 8" strokeWidth=".7" />
    </g>
  </Board>
);

/* ---------- task icons ---------- */
const ShellIcon = () => (
  <svg width="32" height="30" viewBox="0 0 32 30">
    <path d="M16 27Q0 20 1 10l3-4 4-2 4-3h8l4 3 4 2 3 5q0 10-15 16z" fill="#f8c766" stroke="#d99029" />
    <path d="M16 27L5 8M16 27L11 3M16 27V2M16 27l5-24M16 27L27 8" stroke="#fff2c8" />
    <path d="M21 10l3 6 7 1-5 4 2 8-7-4-7 4 2-8-5-4 7-1z" fill="#f18a2c" stroke="#b4501a" />
  </svg>
);
const NoteIcon = () => (
  <svg width="26" height="28" viewBox="0 0 26 28">
    <rect x="1" y="1" width="24" height="26" fill="#eaf7fc" stroke="#86a7b6" />
    <path d="M4 5h18M4 8h18M4 11h18M4 14h18M4 17h18M4 20h18M4 23h18" stroke="#3b9bc4" strokeWidth="1.500" />
  </svg>
);
const FloppyIcon = () => (
  <svg width="32" height="32" viewBox="0 0 32 32">
    <path d="M1 1h28l2 2v28H1z" fill="#1c2fc4" stroke="#0c1560" />
    <path d="M8 1h16v9H8z" fill="#d9dbe4" />
    <path d="M17 2h4v7h-4z" fill="#26306e" />
    <path d="M4 14h24v17H4z" fill="#fff" />
    <path d="M6 18h20M6 22h20M6 27h10" stroke="#c03a50" />
    <text x="17" y="29" fontSize="7" fontFamily="Liberation Sans" fill="#222">64</text>
  </svg>
);
const LetterIcon = ({ char, color, edge, family, size = 34, slant, children }) => (
  <svg width="34" height="34" viewBox="0 0 34 34">
    {children}
    <text x="17" y="29" fontSize={size} fontWeight="700" textAnchor="middle" fontFamily={family} fontStyle={slant ? "italic" : "normal"} fill={color} stroke={edge}>{char}</text>
  </svg>
);
const WingIcon = () => (
  <svg width="32" height="32" viewBox="0 0 32 32">
    <circle cx="16" cy="16" r="15.500" fill="#2496e8" />
    <path d="M7 7q8 5 17 6 1 3-3 7h3l-8 9 2-6h-3l1-3q-5-1-6-4l3 0q-5-3-6-9z" fill="#fff" />
  </svg>
);
const EyeIcon = () => (
  <svg width="32" height="28" viewBox="0 0 32 28">
    <path d="M0 4l6-4 7 3 2 3-10 2zM2 17l5-4 4 9-7-1z" fill="#28d0c0" stroke="#06484e" />
    <ellipse cx="20" cy="15" rx="11" ry="9" fill="#167e8c" stroke="#053a4a" strokeWidth="2" />
    <circle cx="21" cy="13" r="6" fill="#2ae3d0" stroke="#e6c73a" />
    <circle cx="21" cy="13" r="3" fill="#08306a" />
    <path d="M2 20q7 8 22 5" stroke="#f0f6ff" strokeWidth="2" fill="none" />
  </svg>
);
const OfficeDoc = ({ char, color, sheet }) => (
  <svg width="32" height="32" viewBox="0 0 32 32">
    <path d="M12 5l18 3v20l-16 3z" fill="#fff" stroke={color} />
    {sheet ? (
      <path d="M19 14h4v4h-4zM25 14h4v4h-4zM19 20h4v3h-4zM25 20h4v3h-4zM19 25h4v3h-4zM25 25h4v3h-4z" fill={color} opacity=".8" />
    ) : (
      <path d="M19 12h9M19 15h9M19 18h9M19 21h9M17 24h11" stroke={color} />
    )}
    <path d="M6 1h14l-3 21-14 3L2 7q0-5 4-6z" fill="#f4f8f1" stroke={color} strokeWidth="2" />
    <text x="10" y="19" fontSize="15" fontWeight="700" textAnchor="middle" fontFamily="Liberation Sans" fill={color}>{char}</text>
  </svg>
);
const StartOrb = () => (
  <svg width="38" height="38" viewBox="0 0 38 38">
    <defs>
      <radialGradient id="start" cx="50%" cy="95%" r="90%">
        <stop offset="0" stopColor="#5ff0ff" />
        <stop offset=".45" stopColor="#1a7cb8" />
        <stop offset="1" stopColor="#1b3f66" />
      </radialGradient>
    </defs>
    <circle cx="19" cy="19" r="17.500" fill="url(#start)" stroke="#9cc3d8" />
    <path d="M11 10q4-3 8 0l-2 8q-4-2-8 0z" fill="#f0602a" />
    <path d="M20 11q4 3 9 0l-2 7q-4 3-9 0z" fill="#8cc63f" />
    <path d="M9 19q4-2 8 0l-2 8q-4-3-8 0z" fill="#3da5e8" />
    <path d="M18 20q4 3 9 0l-2 8q-4 2-9-1z" fill="#fcc32c" />
  </svg>
);

/* ---------- data ---------- */
const MENU = ["开始", "插入", "页面布局", "公式", "数据", "审阅", "视图"];
const COLUMNS = [
  ["A", 58], ["B", 37], ["C", 166], ["D", 31], ["E", 81], ["F", 54], ["G", 49], ["H", 89], ["I", 139], ["J", 88],
  ..."KLMNOPQRSTUVW".split("").map((c) => [c, 72]),
  ["AA", 72], ["AB", 72],
];
const NOTES = [
  { text: "附图所示2层忽略", hot: true, link: 1 },
  { text: <>沉金<Half>0.05um</Half></> },
  { text: "不加任何标记", hot: true },
  { text: "附图所示高亮的3个板边做金属包边", link: 2 },
  { text: "铣开交货" },
];
const LAYERS = [
  [["to", "#fff"], ["ts", "#00a482"], ["cs", "#fec84e", "#439900"], ["sig2b", "#fec84e"], ["sig3t", "#fec84e"], ["ss", "#fec84e"], ["bs", "#00a482"]],
  [["drl", "#9ab4be"], ["rout", "#d9d9d9"]],
  [["outline", "#9adbdd", "#e81c1c"], ["topau.gbr", "#9adbdd"], ["botau.gbr", "#9adbdd"]],
];
const TASKS = [
  { name: "shell", icon: <ShellIcon /> },
  { name: "notes", icon: <NoteIcon /> },
  { name: "disk", icon: <FloppyIcon /> },
  { name: "genesis", icon: <LetterIcon char="G" color="#d4281c" edge="#8e120c" family="Liberation Sans" slant /> },
  {
    name: "project",
    icon: (
      <LetterIcon char="P" color="#14964a" edge="#14964a" family="Liberation Sans" size={32}>
        <path d="M5 24V3h19" fill="none" stroke="#3fbf6e" />
      </LetterIcon>
    ),
  },
  { name: "talk", icon: <WingIcon /> },
  { name: "viewer", icon: <EyeIcon /> },
  { name: "xmanager", icon: <LetterIcon char="X" color="#7a1590" edge="#fff" family="Liberation Serif" size={38} />, stack: true },
  { name: "excel", icon: <OfficeDoc char="X" color="#3b8a2e" sheet />, stack: true, active: true },
  { name: "word", icon: <OfficeDoc char="W" color="#2f5ca8" /> },
];

const Group = ({ title, w, launch, pad, gap, children }) => (
  <GroupBox $w={w}>
    <GroupBody $pad={pad} $gap={gap}>{children}</GroupBody>
    <GroupCaption>
      {title}
      {launch && <Launcher aria-label={title}><LaunchIcon /></Launcher>}
    </GroupCaption>
  </GroupBox>
);

const ComboBox = ({ label, w, value = "" }) => (
  <ComboWrap>
    <Combo aria-label={label} $w={w} disabled defaultValue={value}>
      <option value={value}>{value}</option>
    </Combo>
    <Arrow color="#a3a9b3" />
  </ComboWrap>
);

const Big = ({ icon, w, off, lines }) => (
  <BigButton $w={w} $off={off}>
    {icon}
    <span>{lines[0]}</span>
    <span>
      {lines[1]}
      <Arrow color={off ? "#a3a9b3" : "#4d628c"} />
    </span>
  </BigButton>
);

const RibbonGroups = () => (
  <Ribbon>
    <Group title="剪贴板" w={112} launch pad="0 0 0 2px" gap={3}>
      <Big icon={<PasteIcon />} w={44} lines={["粘贴"]} />
      <Stack>
        <SmallButton><CutIcon />剪切</SmallButton>
        <SmallButton><CopyIcon />复制</SmallButton>
        <SmallButton><BrushIcon />格式刷</SmallButton>
      </Stack>
    </Group>

    <Group title="字体" w={234} launch pad="10px 2px 0 3px">
      <Stack $gap={10}>
        <Line $gap={3}>
          <Line>
            <ComboBox label="字体" w={131} />
            <ComboBox label="字号" w={47} />
          </Line>
          <Cluster $w={46}>
            <SizeTool><Letter $size={17}>A</Letter><Arrow dir="up" size={5} /></SizeTool>
            <SizeTool><Letter $size={13}>A</Letter><Arrow size={5} /></SizeTool>
          </Cluster>
        </Line>
        <Line $gap={4}>
          <Cluster $w={79}>
            <Tool><b>B</b></Tool>
            <Tool><i>I</i></Tool>
            <Tool><u>U</u><Arrow color="#a3a9b3" /></Tool>
          </Cluster>
          <Cluster $w={34}><Tool><BorderIcon /><Arrow /></Tool></Cluster>
          <Cluster $w={66}>
            <Tool><FillIcon /><Arrow /></Tool>
            <Tool><Letter $size={16} $bar>A</Letter><Arrow color="#a3a9b3" /></Tool>
          </Cluster>
          <Cluster $w={35}>
            <Tool><Pinyin><span>wén</span><span>文</span></Pinyin><Arrow color="#a3a9b3" /></Tool>
          </Cluster>
        </Line>
      </Stack>
    </Group>

    <Group title="对齐方式" w={229} launch pad="0 4px 0 3px">
      <Stack $gap={12}>
        <Line />
        <Line $gap={4}>
          <Cluster $w={67}>
            <Tool><Bars rows={[[0, 1, 14], [2, 4, 10], [0, 7, 14]]} /></Tool>
            <Tool><Bars rows={[[0, 4, 14], [2, 7, 10], [0, 10, 14]]} /></Tool>
            <Tool><Bars rows={[[0, 6, 14], [2, 9, 10], [0, 12, 14]]} /></Tool>
          </Cluster>
          <Cluster $w={32}><Tool><OrientIcon /><Arrow color="#a3a9b3" /></Tool></Cluster>
        </Line>
        <Line $gap={4}>
          <Cluster $w={67}>
            <Tool><Bars rows={[[0, 1, 14], [0, 4, 9], [0, 7, 14], [0, 10, 9]]} /></Tool>
            <Tool><Bars rows={[[0, 1, 14], [2, 4, 10], [0, 7, 14], [2, 10, 10]]} /></Tool>
            <Tool><Bars rows={[[0, 1, 14], [5, 4, 9], [0, 7, 14], [5, 10, 9]]} /></Tool>
          </Cluster>
          <Cluster $w={44}>
            <Tool><IndentIcon /></Tool>
            <Tool><IndentIcon flip /></Tool>
          </Cluster>
        </Line>
      </Stack>
      <Divider />
      <Stack $gap={11}>
        <Line />
        <SmallButton $off><WrapIcon />自动换行</SmallButton>
        <SmallButton $off><MergeIcon />合并后居中<Arrow color="#a3a9b3" /></SmallButton>
      </Stack>
    </Group>

    <Group title="数字" w={136} launch pad="10px 3px 0">
      <Stack $gap={10}>
        <ComboBox label="数字格式" w={127} value="常规" />
        <Line $gap={4}>
          <Cluster $w={79}>
            <Tool><MoneyIcon /><Arrow color="#a3a9b3" /></Tool>
            <Tool>%</Tool>
            <Tool><b>,</b></Tool>
          </Cluster>
          <Cluster $w={44}>
            <Tool><Pinyin><span>←.0</span><span>.00</span></Pinyin></Tool>
            <Tool><Pinyin><span>.00</span><span>→.0</span></Pinyin></Tool>
          </Cluster>
        </Line>
      </Stack>
    </Group>

    <Group title="样式" w={674} pad="0 6px 0 0">
      <Big icon={<TableIcon />} w={56} off lines={["条件格式"]} />
      <Big icon={<TableIcon brush />} w={64} off lines={["套用", "表格格式"]} />
      <Gallery>
        <GalleryGrid>
          <StyleCell aria-label="空白" />
          <StyleCell $size={12} $color="#5f6b80">样式 1</StyleCell>
          <StyleCell $color="#5f6b80">常规</StyleCell>
          <StyleCell $size={14} $bg="#d3deec">差</StyleCell>
          <StyleCell $size={14} $bg="#d3e1f2">好</StyleCell>
          <StyleCell $size={14} $bg="#d3e1f2" $color="#8b97a9">适中</StyleCell>
          <StyleCell $size={14} $under $color="#536e9e">超链接</StyleCell>
          <StyleCell $color="#9aa3b2" $bg="#dee8f6" $border="1px solid #8a97b4">计算</StyleCell>
          <StyleCell $bold $color="#fff" $bg="#a9b7cd" $border="3px double #6d7c98">检查单元格</StyleCell>
          <StyleCell $italic $color="#98a3b6">解释性文本</StyleCell>
        </GalleryGrid>
        <GalleryScroll>
          <button aria-label="上一行"><Arrow dir="up" color="#a3a9b3" /></button>
          <button aria-label="下一行"><Arrow color="#a3a9b3" /></button>
          <button aria-label="其他"><Arrow color="#a3a9b3" /></button>
        </GalleryScroll>
      </Gallery>
    </Group>

    <Group title="单元格" w={134} pad="0 4px 0 2px">
      <Big icon={<InsertCells />} w={42} lines={["插入"]} />
      <Big icon={<InsertCells remove />} w={42} lines={["删除"]} />
      <Big icon={<FormatCells />} w={42} lines={["格式"]} />
    </Group>

    <Group title="编辑" w={176} pad="0 0 0 6px" gap={2}>
      <Stack>
        <SmallButton $off><Letter $size={16}>Σ</Letter>&nbsp;自动求和<Arrow color="#a3a9b3" /></SmallButton>
        <SmallButton $off><FillDown />填充<Arrow color="#a3a9b3" /></SmallButton>
        <SmallButton><Eraser />清除<Arrow /></SmallButton>
      </Stack>
      <Big icon={<SortIcon />} w={42} off lines={["排序和", "筛选"]} />
      <Big icon={<Binoculars />} w={42} lines={["查找和", "选择"]} />
    </Group>
  </Ribbon>
);

const blanks = () => COLUMNS.slice(10).map(([c]) => <Blank key={c} />);

const SheetGrid = () => (
  <Grid>
    <colgroup>
      <col style={{ width: 34 }} />
      {COLUMNS.map(([c, w]) => <col key={c} style={{ width: w }} />)}
    </colgroup>
    <thead>
      <tr style={{ height: 19 }}>
        <Corner aria-label="全选" />
        {COLUMNS.map(([c]) => <ColHead key={c}>{c}</ColHead>)}
      </tr>
    </thead>
    <tbody>
      <tr style={{ height: 30 }}>
        <RowHead>1</RowHead>
        <SheetTitle colSpan={10}>预审指示</SheetTitle>
        {blanks()}
      </tr>
      <tr>
        <RowHead>2</RowHead>
        <Cell>产品<br />编号</Cell>
        <Cell colSpan={3}><Half $size={15}>4S9LA00UA0</Half></Cell>
        <Cell>预审日期</Cell>
        <Cell colSpan={2}><Half $size={15}>2021/8/24</Half></Cell>
        <Cell>预审人</Cell>
        <Cell><Half $size={15}>ldb</Half></Cell>
        <Cell>附件/附图</Cell>
        {blanks()}
      </tr>
      <tr style={{ height: 30 }}>
        <RowHead>3</RowHead>
        <Cell rowSpan={4} $blue>待确认<br />光绘时<br />一起确<br />认问题</Cell>
        <PlainCell>序号</PlainCell>
        <Cell colSpan={5} $blue>待与客户确认问题<Half $size={15}>(</Half>原因与内容<Half $size={15}>)</Half></Cell>
        <Cell colSpan={2} $blue>预审建议</Cell>
        <Cell />
        {blanks()}
      </tr>
      {[1, 2, 3].map((n) => (
        <tr key={n} style={{ height: 34 }}>
          <RowHead>{n + 3}</RowHead>
          <NumberCell $plain>{n}</NumberCell>
          <Cell colSpan={5} />
          <Cell colSpan={2} />
          <Cell />
          {blanks()}
        </tr>
      ))}
      <tr style={{ height: 45 }}>
        <RowHead>7</RowHead>
        <Cell colSpan={2}>工艺流程<br />指示</Cell>
        <Cell colSpan={7} />
        <Cell />
        {blanks()}
      </tr>
      {Array.from({ length: 13 }, (_, i) => {
        const note = NOTES[i] || {};
        return (
          <tr key={i}>
            <RowHead>{i + 8}</RowHead>
            {i === 0 && <Cell rowSpan={14}><Half $size={15}>CAM</Half><br />指示</Cell>}
            <NumberCell>{i + 1}</NumberCell>
            <NoteCell colSpan={7} $hot={note.hot}>{note.text}</NoteCell>
            <LinkCell>
              {note.link && <a href={`#fig${note.link}`}>图<Half>{`${note.link}(fig${note.link})’`}</Half></a>}
            </LinkCell>
            {blanks()}
          </tr>
        );
      })}
      {/* the rest of the CAM block, scrolled out of sight */}
      <tr style={{ height: 196 }}>
        <RowHead />
        <Cell />
        <Cell colSpan={7} />
        <Cell />
        {blanks()}
      </tr>
    </tbody>
  </Grid>
);

const JobPicture = () => (
  <Picture>
    <LayerPanel>
      <JobLine>Job : 4s9la00ua0</JobLine>
      <JobLine>Step: net</JobLine>
      <MatrixButton>Job Matrix ...</MatrixButton>
      <LayerList>
        {LAYERS.map((rows) => (
          <div key={rows[0][0]}>
            {rows.map(([name, color, swatch]) => (
              <LayerRow key={name} $on={name === "outline"}>
                <input type="checkbox" />
                <Swatch $color={swatch || "#000"}>
                  {name === "outline" && (
                    <svg width="9" height="9" stroke="#fff" fill="#fff"><path d="M2 2h4L2 6z" /><path d="M3 3l5 5" strokeWidth="2" /></svg>
                  )}
                </Swatch>
                <LayerName $color={color}>{name}{name === "outline" && <span>▪</span>}</LayerName>
              </LayerRow>
            ))}
          </div>
        ))}
      </LayerList>
    </LayerPanel>
    <BoardDrawing />
    <RotateHandle>
      <svg width="11" height="31" viewBox="0 0 11 31">
        <path d="M5.500 10v21" stroke="#6f93a5" />
        <circle cx="5.500" cy="5.500" r="5" fill="#8fd63c" stroke="#44701a" />
      </svg>
    </RotateHandle>
    {["0%", "100%"].map((x) => ["0%", "100%"].map((y) => <Handle key={x + y} $round $x={x} $y={y} />))}
    <Handle $x="50%" $y="0%" />
    <Handle $x="50%" $y="100%" />
    <Handle $x="0%" $y="50%" />
    <Handle $x="100%" $y="50%" />
  </Picture>
);

const App = () => (
  <Window>
    <GlobalStyle />
    <TitleBar>
      <OfficeOrb aria-label="Office"><OrbIcon /></OfficeOrb>
      <BarLeft>
        <QuickAccess>
          <SaveIcon />
          <CurveArrow color="#3d6fc4" />
          <Arrow color="#5474a8" />
          <CurveArrow color="#aab2b8" flip />
          <Arrow color="#b8bbae" />
        </QuickAccess>
        <Arrow color="#2d3f5c" size={8} />
        <ContextTitle>图片工具</ContextTitle>
      </BarLeft>
      <DocTitle>4S9LA00UA0-预审指示&nbsp;&nbsp; [兼容模式]&nbsp; -&nbsp; Microsoft Excel</DocTitle>
      <WindowButtons>
        <WindowButton aria-label="最小化">
          <svg width="12" height="6"><path d="M1 1h10v4H1z" fill="#fff" stroke="#555" /></svg>
        </WindowButton>
        <WindowButton aria-label="还原">
          <svg width="12" height="12" fill="#fff" stroke="#555"><path d="M4 1h7v7H4zM1 4h7v7H1zM4 6h2v2H4z" /></svg>
        </WindowButton>
        <WindowButton aria-label="关闭" $close>
          <svg width="12" height="11" stroke="#fff" strokeWidth="3"><path d="M2 1l8 9M10 1L2 10" /></svg>
        </WindowButton>
      </WindowButtons>
    </TitleBar>

    <TabStrip>
      {MENU.map((m, i) => <Tab key={m} $active={i === 0}>{m}</Tab>)}
      <ContextTab>格式</ContextTab>
      <TabTools>
        <HelpIcon />
        <svg width="8" height="10"><path d="M0 9h7" stroke="#555f70" strokeWidth="2" /></svg>
        <svg width="10" height="10" fill="none" stroke="#555f70"><path d="M2.500 2V.5h7v6H8M.5 2.500h7v6h-7zM0 3.500h8" /></svg>
        <svg width="9" height="10" stroke="#555f70" strokeWidth="2"><path d="M1 1l7 8M8 1L1 9" /></svg>
      </TabTools>
    </TabStrip>
    <RibbonGroups />

    <MessageRow>
      <MessageBar>
        <Shield />
        <b>安全警告</b>
        <span>部分活动内容已被禁用。</span>
        <OptionsButton>选项...</OptionsButton>
      </MessageBar>
      <Close aria-label="关闭消息栏">
        <svg width="9" height="10" stroke="#666f80" strokeWidth="2"><path d="M1 1l7 8M8 1L1 9" /></svg>
      </Close>
    </MessageRow>

    <FormulaBar>
      <NameBox aria-label="名称框" defaultValue="图片 2" />
      <Line><Arrow color="#000" size={8} /></Line>
      <FxZone><Knob />fx</FxZone>
      <FormulaInput aria-label="编辑栏" />
      <Expand aria-label="展开编辑栏">
        <svg width="8" height="10" fill="none" stroke="#000" strokeWidth="2"><path d="M1 1l3 3 3-3M1 5l3 3 3-3" /></svg>
      </Expand>
    </FormulaBar>

    <Workspace>
      <Sheet>
        <SheetGrid />
        <JobPicture />
        <LinkTip>
          file:///E:\input\4S9LA00UA0-预审指示.xls -<br />
          '图2(fig2)'!A1 -<br />
          单击一次可跟踪超链接。<br />
          单击并按住不放可选择此单元格。
        </LinkTip>
      </Sheet>
      <VScroll>
        <SplitBox />
        <ArrowSlot><Arrow dir="up" color="#34507f" size={9} /></ArrowSlot>
        <VThumb>
          <svg width="8" height="8" stroke="#7486a5"><path d="M0 .5h8M0 3.500h8M0 6.500h8" /></svg>
        </VThumb>
        <Arrow color="#2d4470" size={9} />
      </VScroll>
    </Workspace>

    <SheetBar>
      <NavButtons>
        <svg width="7" height="8" fill="#27427c"><path d="M0 0h1v8H0zM6 0v8L2 4z" /></svg>
        <Arrow dir="left" color="#27427c" size={8} />
        <Arrow dir="right" color="#27427c" size={8} />
        <svg width="7" height="8" fill="#27427c"><path d="M6 0h1v8H6zM1 0v8l4-4z" /></svg>
      </NavButtons>
      <SheetTab $active>指示<Slash /></SheetTab>
      {Array.from({ length: 11 }, (_, i) => (
        <SheetTab key={i}>图<Half $size={11}>{`${i + 1}(fig${i + 1})`}</Half><Slash /></SheetTab>
      ))}
      <SheetTab aria-label="插入工作表">
        <svg width="16" height="13" viewBox="0 0 16 13">
          <path d="M5 3h10v9H7z" fill="#eef3fb" stroke="#6f7e9c" />
          <path d="M4 0v8M0 4h8M1 1l6 6M7 1L1 7" stroke="#e39b26" />
        </svg>
        <Slash />
      </SheetTab>
      <HScroll>
        <SplitBox $tall />
        <Arrow dir="left" color="#2d4470" size={9} />
        <HThumb>
          <svg width="8" height="8" stroke="#7486a5"><path d="M.5 0v8M3.500 0v8M6.500 0v8" /></svg>
        </HThumb>
        <Arrow dir="right" color="#2d4470" size={9} />
        <SplitBox $tall />
      </HScroll>
      <ScrollEnd />
    </SheetBar>

    <StatusBar>
      <Ready>就绪</Ready>
      <ZoomZone>
        <ViewButtons>
          <button aria-label="普通">
            <svg width="13" height="11" fill="#fff" stroke="#6b6b6b"><path d="M.5 .5h12v10H.5zM4.500 0v11M8.500 0v11M0 4h13M0 7.500h13" /></svg>
          </button>
          <button aria-label="页面布局">
            <svg width="12" height="13" fill="#fff" stroke="#6b6b6b"><path d="M.5 .5h11v12H.5z" /><path d="M3.500 3h5v7h-5zM4 5h4M4 7h4" /></svg>
          </button>
          <button aria-label="分页预览">
            <svg width="12" height="12" fill="#fff" stroke="#6b6b6b"><path d="M.5 .5h11v11H.5z" /><path d="M3.500 0v7h4V0M7.500 7h4" /></svg>
          </button>
        </ViewButtons>
        <ZoomText>100%</ZoomText>
        <svg width="16" height="16" fill="#e6effb" stroke="#3e5f92"><circle cx="8" cy="8" r="7" /><path d="M4 8h8" strokeWidth="2" /></svg>
        <Zoom type="range" aria-label="显示比例" defaultValue="50" />
        <svg width="16" height="16" fill="#e6effb" stroke="#3e5f92"><circle cx="8" cy="8" r="7" /><path d="M4 8h8M8 4v8" strokeWidth="2" /></svg>
      </ZoomZone>
    </StatusBar>

    <Taskbar>
      <Wallpaper width="1200" height="39" viewBox="0 0 1200 39">
        <defs>
          <filter id="soft" x="-10%" y="-20%" width="120%" height="140%"><feGaussianBlur stdDeviation="4" /></filter>
        </defs>
        <g filter="url(#soft)">
          <path d="M0 0h310v39H0z" fill="#9a7565" />
          <path d="M0 8l40-8 20 39H0z" fill="#c08a70" />
          <path d="M186 0h24v39h-24z" fill="#a08c74" />
          <path d="M200 -6h90v26h-90z" fill="#b8608a" />
          <path d="M205 20q13-14 26 0v27h-26zM236 20q12-14 24 0v27h-24zM263 20q12-14 22 0v27h-22z" fill="#e0cd84" />
          <path d="M305 0h24l-16 39h-18z" fill="#cc7a4c" />
          <path d="M318 0h70v39h-84z" fill="#77785c" />
          <path d="M392 -4h26l-4 47h-14zM518 -4h26l-4 47h-14zM576 -4h26l-4 47h-14z" fill="#d2caa2" />
          <path d="M446 -4h28q6 20 26 24l2 23h-56z" fill="#50351c" />
          <path d="M750 26h42V-4h14v47h-56z" fill="#b59a7a" />
          <path d="M680 22h20v20h-20zM860 -4h80v22h-60z" fill="#7d7a5c" />
          <path d="M950 0h20v30h-22z" fill="#8a6830" />
          <path d="M1000 0h46l-16 18h-14z" fill="#a07a52" />
        </g>
      </Wallpaper>
      <StartButton aria-label="开始菜单"><StartOrb /></StartButton>
      {TASKS.map((t) => (
        <TaskButton key={t.name} aria-label={t.name} $stack={t.stack} $active={t.active}>{t.icon}</TaskButton>
      ))}
      <Tray>
        <svg width="15" height="16" fill="none" stroke="#d5d5cc"><path d="M.5 6.500h14v9H.5zM3 9h9M3 11h9M4 13h7M7 6q0-4 7-5" /></svg>
        <HelpIcon size={15} />
        <svg width="9" height="20" fill="none" stroke="#fff"><path d="M3 3V.5h5v4H6M.5 3.500h5v4h-5z" /><path d="M2 15h5l-2.500 3z" fill="#fff" /></svg>
        <Arrow dir="up" color="#fff" size={8} />
        <svg width="16" height="16" fill="#fff" stroke="#fff"><path d="M1 6h3l4-4v12l-4-4H1z" /><path d="M10 5q2 3 0 6M13 3q3 5 0 10" fill="none" /></svg>
        <svg width="16" height="16"><path d="M2 1v15M2 2h10v7H2z" fill="#fff" stroke="#fff" /><circle cx="11" cy="11" r="5" fill="#d9201c" /><path d="M9 9l4 4M13 9l-4 4" stroke="#fff" /></svg>
        <svg width="16" height="16" fill="none" stroke="#fff"><path d="M5.500 3.500h10v8h-10zM8 14.500h6M1 1v4h4V1M3 5v9h5" /></svg>
        <Clock>21:51<br />2021/8/31</Clock>
        <ShowDesktop aria-label="显示桌面" />
      </Tray>
    </Taskbar>
  </Window>
);

export default App;
